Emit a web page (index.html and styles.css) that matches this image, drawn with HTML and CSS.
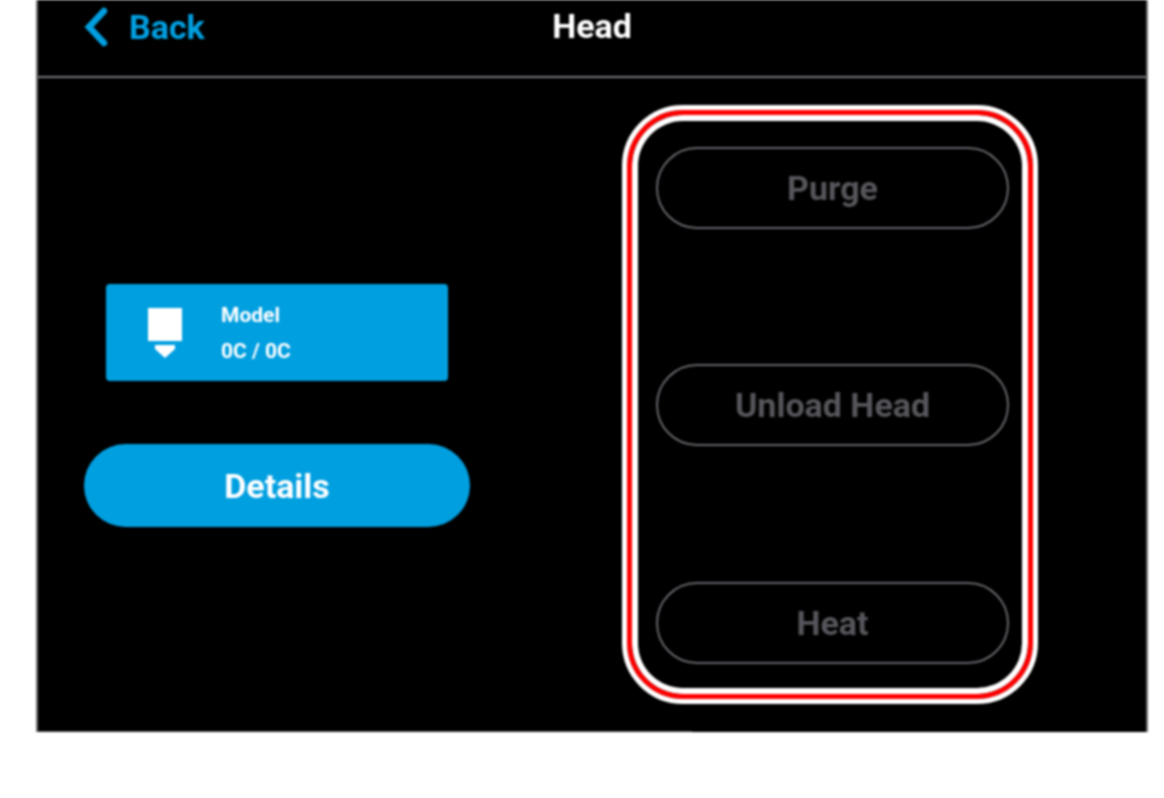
FILE: index.html
```html
<!DOCTYPE html>
<html lang="en">
<head>
    <meta charset="UTF-8">
    <title>Head</title>
    <link rel="stylesheet" href="styles.css">
</head>
<body>
<div class="screen">
    <div class="top">
        <a class="back">
            <svg class="chevron" width="26" height="40" viewBox="0 0 26 40">
                <path d="M21 4 L6 20 L21 36" fill="none" stroke="#009fe0" stroke-width="6.5" stroke-linecap="round" stroke-linejoin="miter"/>
            </svg>
            Back
        </a>
        <h1>Head</h1>
        <div></div>
    </div>
    <div class="main">
        <div class="left">
            <div class="material">
                <svg width="36" height="52" viewBox="0 0 36 52">
                    <rect x="1" y="1" width="34" height="33" fill="#fff"/>
                    <path d="M8 38 H28 V42 L18 51 L8 42 Z" fill="#fff"/>
                </svg>
                <div class="material-text">
                    <div>Model</div>
                    <div>0C / 0C</div>
                </div>
            </div>
            <button class="btn-details">Details</button>
        </div>
        <div class="callout">
            <button class="btn-off">Purge</button>
            <button class="btn-off btn-middle">Unload Head</button>
            <button class="btn-off">Heat</button>
        </div>
    </div>
    <div class="bottom"></div>
</div>
</body>
</html>
```

FILE: styles.css
```css
body, html {
    margin: 0;
    height: 100%;
    background-color: white;
}
body {
    padding-left: 36px;
    font-family: Roboto, sans-serif;
}
.screen {
    width: 1112px;
    height: 732px;
    box-sizing: border-box;
    background-color: black;
    border-left: 2px solid #6e6e72;
    border-right: 2px solid #6e6e72;
    display: flex;
    flex-direction: column;
    filter: blur(0.9px);
}
.top {
    height: 78px;
    box-sizing: border-box;
    border-bottom: 2px solid #77777d;
    display: grid;
    grid-template-columns: 1fr auto 1fr;
    align-items: start;
    padding: 7px 0 0 45px;
}
.top h1 {
    margin: 0;
    padding-right: 45px;
    color: white;
    font-size: 34px;
    line-height: 38px;
    font-weight: 700;
}
.back {
    display: flex;
    align-items: center;
    gap: 20px;
    color: #009fe0;
    font-size: 34px;
    line-height: 38px;
    font-weight: 700;
}
.main {
    flex: 1;
    display: flex;
    align-items: flex-start;
    padding-left: 46px;
}
.left {
    width: 386px;
    margin-top: 206px;
    display: flex;
    flex-direction: column;
    align-items: center;
    gap: 63px;
}
.material {
    width: 342px;
    height: 97px;
    box-sizing: border-box;
    background-color: #009fe0;
    border-radius: 4px;
    display: flex;
    align-items: center;
    gap: 38px;
    padding-left: 41px;
    color: white;
}
.material-text {
    font-size: 21px;
    font-weight: 700;
    line-height: 36px;
}
.btn-details {
    width: 386px;
    height: 83px;
    border: none;
    border-radius: 42px;
    background-color: #009fe0;
    color: white;
    font-family: inherit;
    font-size: 34px;
    font-weight: 700;
}
.callout {
    width: 406px;
    height: 589px;
    box-sizing: border-box;
    margin: 32px 0 0 157px;
    padding: 32px 0 30px 5px;
    border: 5px solid #ff0000;
    border-radius: 56px;
    outline: 5px solid white;
    box-shadow: inset 0 0 0 6px white;
    display: flex;
    flex-direction: column;
    justify-content: space-between;
    align-items: center;
}
.btn-off {
    width: 353px;
    height: 82px;
    background: transparent;
    border: 2px solid #66666c;
    border-radius: 41px;
    color: #55555b;
    font-family: inherit;
    font-size: 34px;
    font-weight: 700;
}
.btn-middle {
    margin-bottom: 2px;
}
.bottom {
    width: 654px;
    height: 1px;
    background-color: #4b4b50;
}
```
